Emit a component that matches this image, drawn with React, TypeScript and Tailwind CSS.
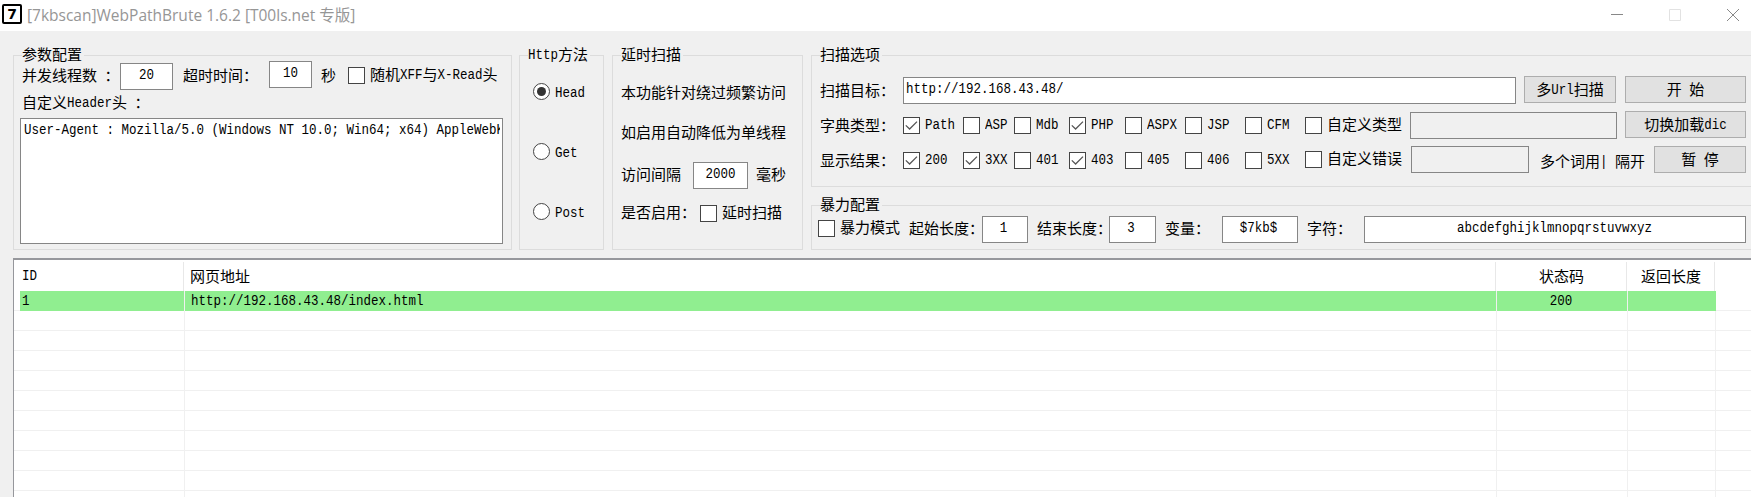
import type { ReactNode } from "react";

/* Half-width runs are set in a narrow fixed pitch, full-width runs at 15px per glyph. */
function T({ children, className = "" }: { children: string; className?: string }) {
  const runs = children.match(/[\x20-\x7e]+|[^\x20-\x7e]+/g) ?? [];
  return (
    <span className={`flex shrink-0 whitespace-pre h-5 leading-5 ${className}`}>
      {runs.map((run, i) =>
        /^[\x20-\x7e]/.test(run) ? (
          <span
            key={i}
            className="block scale-y-[1.18] font-['Liberation_Mono',monospace] text-[12.5px]"
          >
            {run}
          </span>
        ) : (
          <span key={i} className="-mt-px block font-['Noto_Sans_CJK_SC',sans-serif] text-[15px]">
            {run}
          </span>
        ),
      )}
    </span>
  );
}

function Group({ title, className, children }: {
  title: string;
  className: string;
  children: ReactNode;
}) {
  return (
    <section className={`relative shrink-0 border border-[#dcdcdc] ${className}`}>
      <div className="absolute -top-[11px] left-[8px] bg-[#f0f0f0] pr-0.5">
        <T>{title}</T>
      </div>
      {children}
    </section>
  );
}

function Check({ on = false, className = "" }: { on?: boolean; className?: string }) {
  return (
    <span className={`block size-[17px] shrink-0 border border-[#444] bg-white ${className}`}>
      {on && (
        <svg viewBox="0 0 15 15" className="size-[15px]" fill="none" stroke="#555" strokeWidth="1.3">
          <path d="M1.8 7.4 5.6 11 13 3.6" />
        </svg>
      )}
    </span>
  );
}

function Field({ value = "", className = "" }: { value?: string; className?: string }) {
  return (
    <div className={`flex h-[27px] shrink-0 border border-[#868686] ${className}`}>
      <T className="mt-[1px]">{value}</T>
    </div>
  );
}

function Button({ children, className = "" }: { children: string; className?: string }) {
  return (
    <button className={`flex h-[27px] shrink-0 justify-center border border-[#adadad] bg-[#e1e1e1] pt-[3px] ${className}`}>
      <T>{children}</T>
    </button>
  );
}

function Option({ label, on, className }: { label: string; on?: boolean; className: string }) {
  return (
    <label className={`flex shrink-0 gap-[5px] ${className}`}>
      <Check on={on} />
      <T className="-mt-[2px]">{label}</T>
    </label>
  );
}

function Radio({ label, on = false }: { label: string; on?: boolean }) {
  return (
    <label className="flex h-[60px] gap-[5px]">
      <span className="flex size-[17px] items-center justify-center rounded-full border border-[#444] bg-white">
        {on && <span className="size-[9px] rounded-full bg-[#333]" />}
      </span>
      <T>{label}</T>
    </label>
  );
}

function TitleBar() {
  return (
    <header className="flex h-[31px] shrink-0 bg-white pl-[2px]">
      <span className="mt-[4px] flex size-5 items-center justify-center rounded-[2px] border-2 border-black font-['DejaVu_Sans',sans-serif] text-[14px] leading-none font-bold text-black">
        7
      </span>
      <h1 className="mt-[3px] ml-[5px] font-['Open_Sans','Noto_Sans_CJK_SC',sans-serif] text-[15.5px] leading-6 whitespace-pre text-[#969696]">
        [7kbscan]WebPathBrute 1.6.2 [T00ls.net 专版]
      </h1>
      <div className="mt-[9px] mr-[12px] ml-auto flex h-3 gap-[46px]">
        <svg className="size-3" viewBox="0 0 12 12" stroke="#888" fill="none">
          <path d="M0 5.5h12" />
        </svg>
        <svg className="size-3" viewBox="0 0 12 12" stroke="#e2e2e2" fill="none">
          <path d="M.5.5h11v11H.5z" />
        </svg>
        <svg className="size-3" viewBox="0 0 12 12" stroke="#888" fill="none">
          <path d="M0 0 12 12M12 0 0 12" />
        </svg>
      </div>
    </header>
  );
}

function Params() {
  return (
    <Group title="参数配置" className="h-[195px] w-[499px] pl-[6px]">
      <div className="flex h-[37px] items-start pt-[5px]">
        <T className="mt-[5px] ml-[2px] w-[98px]">并发线程数 ：</T>
        <Field value="20" className="mt-[2px] w-[53px] justify-center bg-white" />
        <T className="mt-[5px] ml-[10px] w-[86px]">超时时间：</T>
        <Field value="10" className="w-[43px] justify-center bg-white" />
        <T className="mt-[5px] ml-[9px]">秒</T>
        <Option label="随机XFF与X-Read头" className="mt-[6px] ml-[12px]" />
      </div>
      <T className="ml-[2px]">自定义Header头 ：</T>
      <div className="mt-[5px] h-[126px] w-[483px] overflow-hidden border border-[#868686] bg-white pr-[2px] pl-[3px]">
        <div className="overflow-hidden">
          <T className="mt-[1px]">User-Agent : Mozilla/5.0 (Windows NT 10.0; Win64; x64) AppleWebK</T>
        </div>
      </div>
    </Group>
  );
}

function Method() {
  return (
    <Group title="Http方法" className="ml-[7px] h-[195px] w-[85px] pt-[27px] pl-[13px]">
      <Radio label="Head" on />
      <Radio label="Get" />
      <Radio label="Post" />
    </Group>
  );
}

function Delay() {
  return (
    <Group title="延时扫描" className="ml-[8px] h-[195px] w-[191px] pt-[27px] pl-[8px]">
      <T>本功能针对绕过频繁访问</T>
      <T className="mt-[20px]">如启用自动降低为单线程</T>
      <div className="mt-[19px] flex items-start">
        <T className="mt-[3px] w-[72px]">访问间隔</T>
        <Field value="2000" className="w-[55px] justify-center bg-white" />
        <T className="mt-[3px] ml-[8px]">毫秒</T>
      </div>
      <div className="mt-[14px] flex items-start">
        <T className="w-[79px]">是否启用：</T>
        <Option label="延时扫描" className="mt-[2px]" />
      </div>
    </Group>
  );
}

function ScanOptions() {
  return (
    <Group title="扫描选项" className="h-[132px] w-[960px] pt-[20px] pl-[8px]">
      <div className="flex h-[35px] items-start">
        <T className="mt-[5px] w-[83px]">扫描目标：</T>
        <Field value="http://192.168.43.48/" className="mt-[1px] w-[613px] bg-white pl-[2px]" />
        <Button className="ml-[8px] w-[92px]">多Url扫描</Button>
        <Button className="ml-[9px] w-[121px]">开 始</Button>
      </div>
      <div className="flex h-[35px] items-start">
        <T className="mt-[5px] w-[83px]">字典类型：</T>
        <Option label="Path" on className="mt-[6px] w-[60px]" />
        <Option label="ASP" className="mt-[6px] w-[51px]" />
        <Option label="Mdb" className="mt-[6px] w-[55px]" />
        <Option label="PHP" on className="mt-[6px] w-[56px]" />
        <Option label="ASPX" className="mt-[6px] w-[60px]" />
        <Option label="JSP" className="mt-[6px] w-[60px]" />
        <Option label="CFM" className="mt-[6px] w-[60px]" />
        <Option label="自定义类型" className="mt-[6px] w-[105px]" />
        <Field className="mt-[1px] w-[207px] bg-[#f0f0f0]" />
        <Button className="ml-[8px] w-[121px]">切换加载dic</Button>
      </div>
      <div className="flex h-[35px] items-start">
        <T className="mt-[5px] w-[83px]">显示结果：</T>
        <Option label="200" on className="mt-[6px] w-[60px]" />
        <Option label="3XX" on className="mt-[6px] w-[51px]" />
        <Option label="401" className="mt-[6px] w-[55px]" />
        <Option label="403" on className="mt-[6px] w-[56px]" />
        <Option label="405" className="mt-[6px] w-[60px]" />
        <Option label="406" className="mt-[6px] w-[60px]" />
        <Option label="5XX" className="mt-[6px] w-[60px]" />
        <Option label="自定义错误" className="mt-[5px] w-[106px]" />
        <Field className="w-[118px] bg-[#f0f0f0]" />
        <T className="mt-[6px] ml-[11px] w-[114px]">多个词用| 隔开</T>
        <Button className="w-[92px]">暂 停</Button>
      </div>
    </Group>
  );
}

function BruteConfig() {
  return (
    <Group title="暴力配置" className="mt-[18px] h-[45px] w-[960px] pt-[10px] pl-[6px]">
      <div className="flex items-start">
        <Option label="暴力模式" className="mt-[4px] w-[91px]" />
        <T className="mt-[3px] w-[73px]">起始长度：</T>
        <Field value="1" className="w-[46px] justify-center bg-white pr-[3px]" />
        <T className="mt-[3px] ml-[9px] w-[72px]">结束长度：</T>
        <Field value="3" className="w-[47px] justify-center bg-white pr-[3px]" />
        <T className="mt-[3px] ml-[9px] w-[57px]">变量：</T>
        <Field value="$7kb$" className="w-[76px] justify-center bg-white pr-[3px]" />
        <T className="mt-[3px] ml-[9px] w-[57px]">字符：</T>
        <Field value="abcdefghijklmnopqrstuvwxyz" className="w-[382px] justify-center bg-white pr-[1px]" />
      </div>
    </Group>
  );
}

const COLUMNS = "grid grid-cols-[171px_1312px_131px_88px_1fr]";
const EMPTY_ROWS = Array.from({ length: 10 }, (_, i) => i);

function Results() {
  return (
    <div className="mt-[8px] ml-[13px] h-[239px] shrink-0 overflow-hidden border-t-2 border-l border-[#96979c] bg-white">
      <div className={`${COLUMNS} mt-[2px] h-[29px]`}>
        <div className="mr-px border-r border-[#e8e8e8] pt-[4px] pl-[8px]"><T>ID</T></div>
        <div className="mr-px border-r border-[#e8e8e8] pt-[5px] pl-[5px]"><T>网页地址</T></div>
        <div className="mr-px border-r border-[#e8e8e8] pt-[5px] pl-[42px]"><T>状态码</T></div>
        <div className="mr-px border-r border-[#e8e8e8] pt-[5px] pl-[13px]"><T>返回长度</T></div>
      </div>
      <div className={`${COLUMNS} h-[20px] border-b border-[#f0f0f0]`}>
        <div className="ml-[6px] border-r border-[#f0f0f0] bg-[#90ee90] pl-[2px]"><T>1</T></div>
        <div className="border-r border-[#f0f0f0] bg-[#90ee90] pl-[6px]"><T>http://192.168.43.48/index.html</T></div>
        <div className="flex justify-center border-r border-[#f0f0f0] bg-[#90ee90] pr-[2px]"><T>200</T></div>
        <div className="bg-[#90ee90]" />
      </div>
      {EMPTY_ROWS.map((row) => (
        <div key={row} className={`${COLUMNS} h-[20px] border-b border-[#f0f0f0]`}>
          <div className="border-r border-[#f0f0f0]" />
          <div className="border-r border-[#f0f0f0]" />
          <div className="border-r border-[#f0f0f0]" />
          <div className="border-r border-[#f0f0f0]" />
        </div>
      ))}
    </div>
  );
}

export default function App() {
  return (
    <div className="flex h-[497px] w-[1751px] flex-col overflow-hidden bg-[#f0f0f0] text-black">
      <TitleBar />
      <main className="flex h-[219px] shrink-0 items-start overflow-hidden pt-[24px] pl-[13px]">
        <Params />
        <Method />
        <Delay />
        <div className="ml-[8px] flex shrink-0 flex-col">
          <ScanOptions />
          <BruteConfig />
        </div>
      </main>
      <Results />
    </div>
  );
}
